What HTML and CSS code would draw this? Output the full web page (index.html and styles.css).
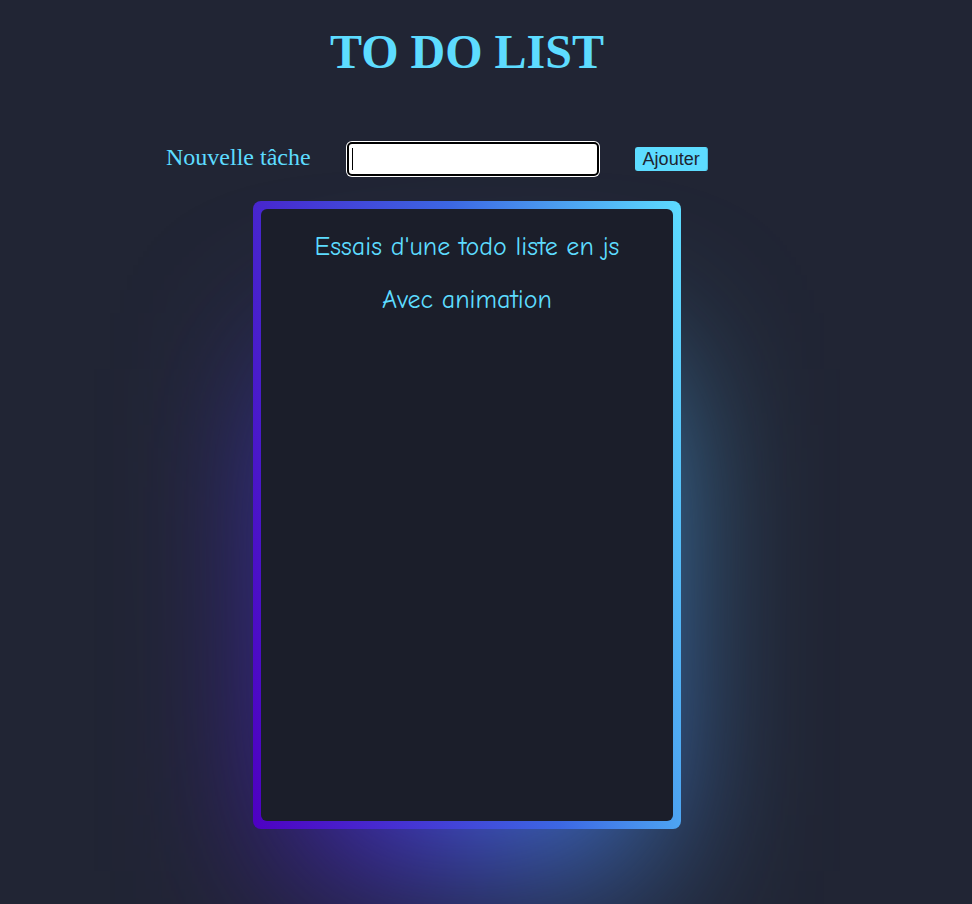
FILE: index.html
```html
<!DOCTYPE html>
<html lang="fr">
<head>
<meta charset="utf-8">
<title>To do list</title>
<link rel="stylesheet" href="styles.css">
</head>
<body>
<div class="page">
  <h1 class="title">TO DO LIST</h1>
  <div class="form-row">
    <label class="label" for="task">Nouvelle tâche</label>
    <div class="input"><span class="caret"></span></div>
    <button class="btn" type="button">Ajouter</button>
  </div>
  <div class="card">
    <div class="card-inner">
      <p class="line">Essais d'une todo liste en js</p>
      <p class="line">Avec animation</p>
    </div>
  </div>
</div>
</body>
</html>
```

FILE: styles.css
```css
html, body {
  margin: 0;
  padding: 0;
}
body {
  background: #212534;
  height: 904px;
  overflow: hidden;
}
.page {
  width: 934px;
  text-align: center;
}
.title {
  margin: 24px 0 0;
  font-family: "Liberation Serif", "Times New Roman", serif;
  font-size: 48px;
  line-height: 55px;
  font-weight: bold;
  color: #5ddcff;
}
.form-row {
  display: flex;
  align-items: center;
  gap: 36px;
  margin: 63px 0 0 166px;
  height: 34px;
}
.label {
  font-family: "Liberation Serif", "Times New Roman", serif;
  font-size: 24px;
  color: #5ddcff;
  line-height: 28px;
  margin-top: -4px;
}
.input {
  box-sizing: border-box;
  width: 252px;
  height: 34px;
  background: #fff;
  border: 2px solid #000;
  border-radius: 5px;
  box-shadow: 0 0 0 1px #fff;
  display: flex;
  align-items: center;
  padding-left: 3px;
}
.caret {
  width: 1px;
  height: 22px;
  background: #000;
}
.btn {
  background: #5ddcff;
  border: 1px solid #5ddcff;
  border-right-color: #4fb8d8;
  border-radius: 3px;
  font-family: "Liberation Sans", Arial, sans-serif;
  font-size: 18px;
  line-height: 20px;
  color: #1d2330;
  padding: 1px 7px 1px 7px;
  height: 24px;
  margin-top: -1px;
}
.card {
  position: relative;
  width: 428px;
  height: 628px;
  margin: 25px auto 0;
  box-sizing: border-box;
  padding: 8px;
  border-radius: 8px;
  background: linear-gradient(80deg, #4e00c2, #3c67e3 57%, #5ddcff);
}
.card::after {
  content: "";
  position: absolute;
  left: 0;
  right: 0;
  top: 105px;
  height: 100%;
  transform: scale(0.8);
  filter: blur(105px);
  background: linear-gradient(80deg, #4e00c2, #3c67e3 57%, #5ddcff);
  z-index: -1;
}
.card-inner {
  height: 100%;
  box-sizing: border-box;
  background: #1b1e2a;
  border-radius: 6px;
  padding-top: 23px;
}
.line {
  margin: 0 0 23px;
  font-family: "Comic Sans MS", "Comic Neue", "Open Sans", cursive;
  font-size: 26px;
  line-height: 30px;
  color: #5ddcff;
}
```
